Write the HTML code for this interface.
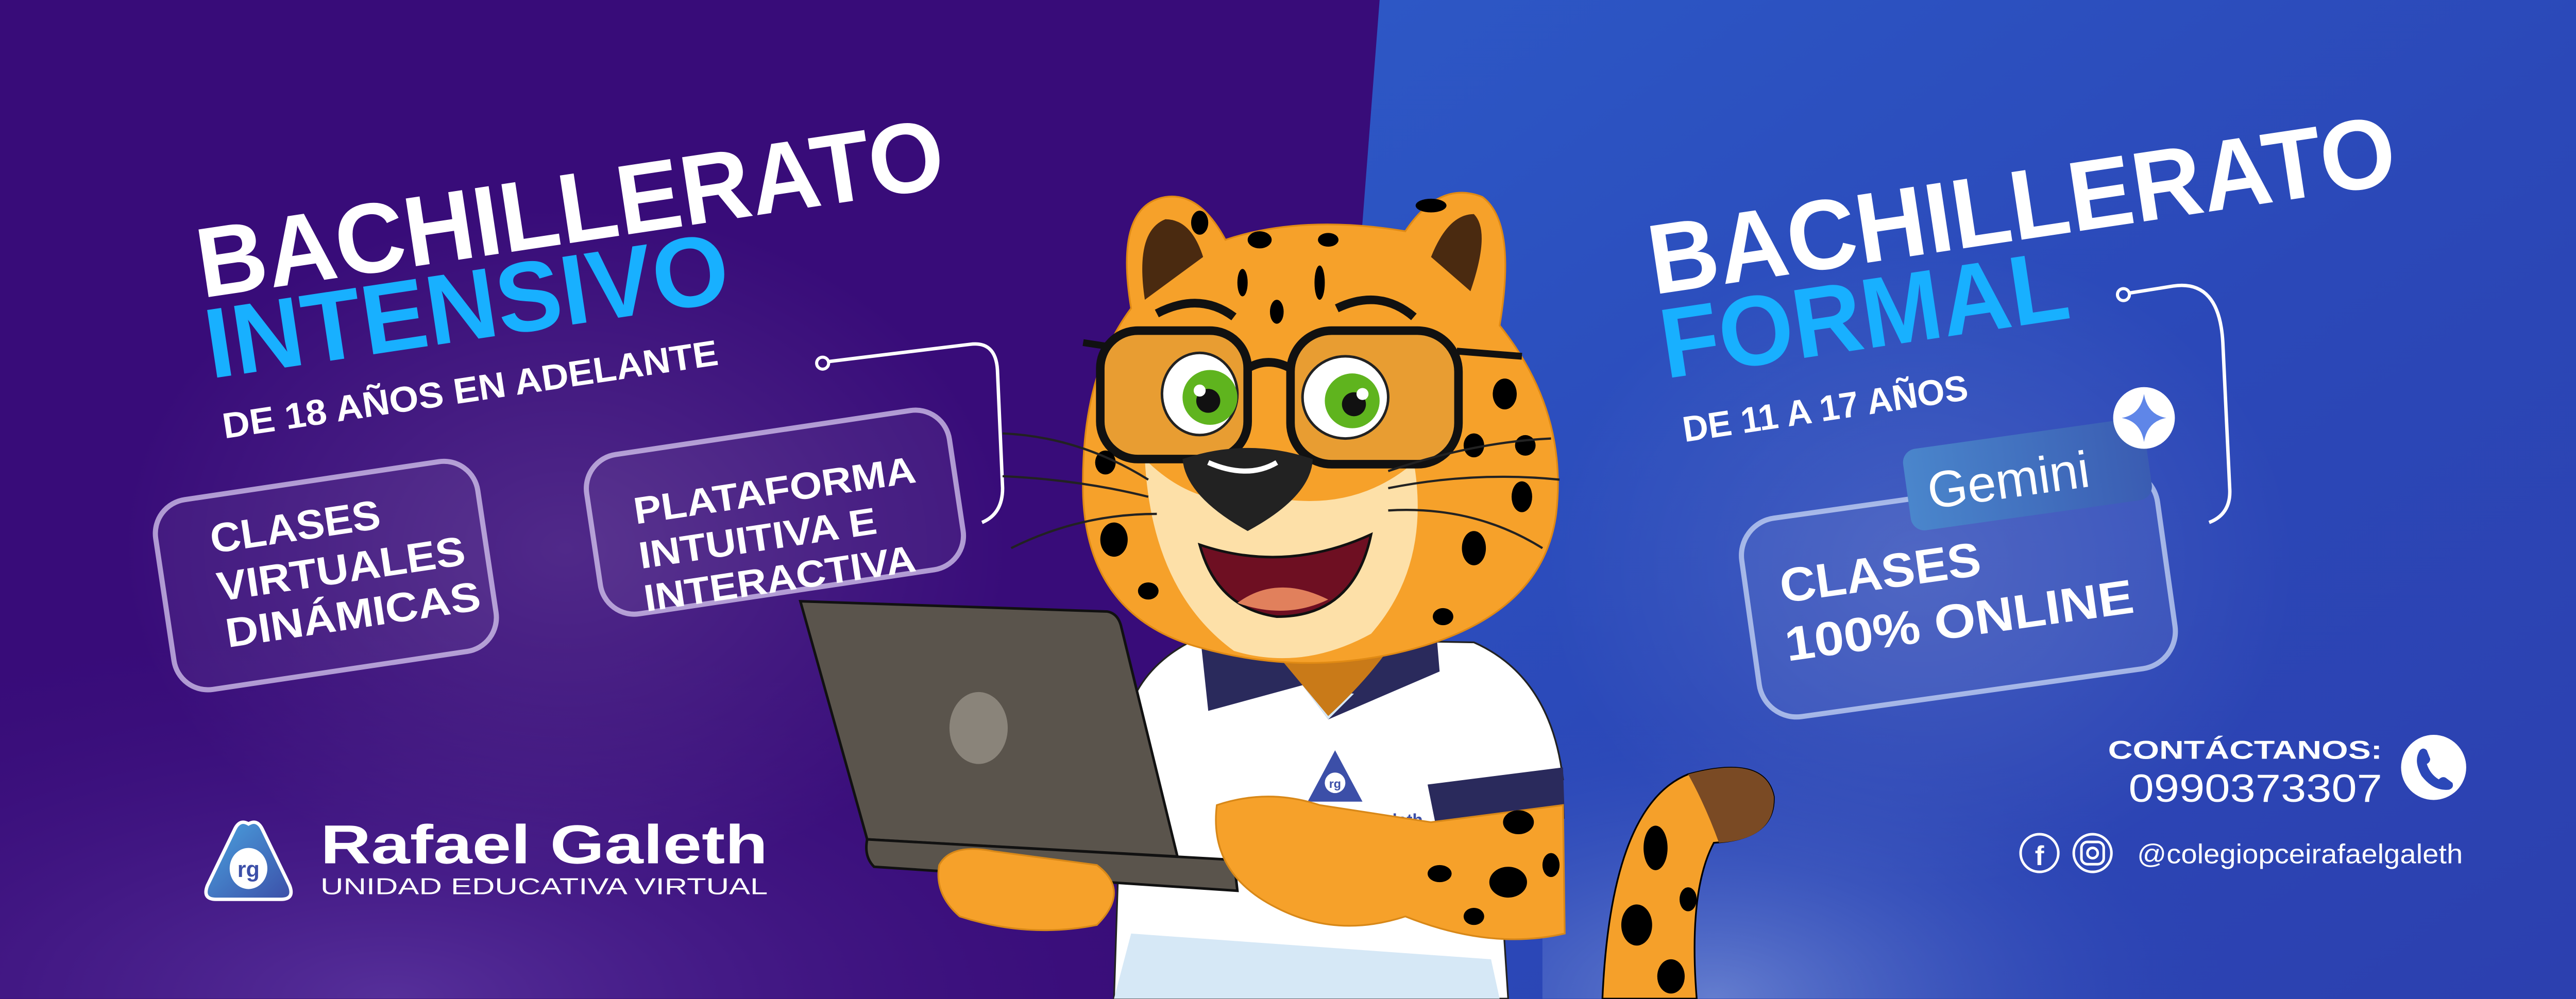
<!DOCTYPE html>
<html><head><meta charset="utf-8"><style>
html,body{margin:0;padding:0;background:#380c79;overflow:hidden;}
svg{display:block;}
text{font-family:"Liberation Sans",sans-serif;}
</style></head><body>
<svg width="5216" height="1940" viewBox="0 0 1568 583.2" preserveAspectRatio="none" xmlns="http://www.w3.org/2000/svg">
<defs>
<linearGradient id="bl" x1="0" y1="0" x2="1" y2="1"><stop offset="0" stop-color="#2d58c6"/><stop offset="0.5" stop-color="#2b48b8"/><stop offset="1" stop-color="#2c3fae"/></linearGradient>
<radialGradient id="hazeL" cx="0.3" cy="1" r="0.7"><stop offset="0" stop-color="#6a47b0" stop-opacity="0.6"/><stop offset="1" stop-color="#380c79" stop-opacity="0"/></radialGradient>
<radialGradient id="hazeR" cx="0.2" cy="1" r="0.6"><stop offset="0" stop-color="#8aa2e0" stop-opacity="0.6"/><stop offset="1" stop-color="#2b48b8" stop-opacity="0"/></radialGradient>
<radialGradient id="soft" cx="0.5" cy="0.5" r="0.5"><stop offset="0" stop-color="#ffffff" stop-opacity="0.12"/><stop offset="1" stop-color="#ffffff" stop-opacity="0"/></radialGradient>
<linearGradient id="gem" x1="0" y1="0" x2="1" y2="0"><stop offset="0" stop-color="#4a86cc"/><stop offset="1" stop-color="#3a5cb2"/></linearGradient>
<linearGradient id="logo" x1="0" y1="0" x2="1" y2="1"><stop offset="0" stop-color="#4aa3df"/><stop offset="1" stop-color="#3c4fa8"/></linearGradient>
</defs>
<rect width="1568" height="583.2" fill="#380c79"/>
<rect x="0" y="250" width="760" height="333" fill="url(#hazeL)"/>
<ellipse cx="330" cy="320" rx="260" ry="200" fill="url(#soft)"/>
<polygon points="805,0 1568,0 1568,583.2 760,583.2" fill="url(#bl)"/>
<rect x="900" y="300" width="500" height="283" fill="url(#hazeR)"/>
<ellipse cx="1120" cy="330" rx="220" ry="190" fill="url(#soft)"/>

<g fill="#fff" font-weight="bold">
<text x="118" y="174" font-size="58" textLength="440" lengthAdjust="spacingAndGlyphs" transform="rotate(-8.5 118 174)">BACHILLERATO</text>
<text x="123" y="221" font-size="58" fill="#18b0ff" textLength="308" lengthAdjust="spacingAndGlyphs" transform="rotate(-8.5 123 221)">INTENSIVO</text>
<text x="131" y="256" font-size="21" textLength="292" lengthAdjust="spacingAndGlyphs" transform="rotate(-8.5 131 256)">DE 18 AÑOS EN ADELANTE</text>
</g>
<g transform="rotate(-8.5 190 335)"><rect x="95" y="280" width="190" height="112" rx="20" fill="rgba(255,255,255,0.05)" stroke="rgba(215,200,240,0.75)" stroke-width="3"/></g>
<g transform="rotate(-8.5 452 298)"><rect x="345" y="252" width="214" height="94" rx="20" fill="rgba(255,255,255,0.05)" stroke="rgba(215,200,240,0.75)" stroke-width="3"/></g>
<g fill="#fff" font-weight="bold" font-size="24">
<text x="124" y="323" textLength="100" lengthAdjust="spacingAndGlyphs" transform="rotate(-8.5 124 323)">CLASES</text>
<text x="128" y="351" textLength="146" lengthAdjust="spacingAndGlyphs" transform="rotate(-8.5 128 351)">VIRTUALES</text>
<text x="133" y="378" textLength="150" lengthAdjust="spacingAndGlyphs" transform="rotate(-8.5 133 378)">DINÁMICAS</text>
<text x="371" y="306" font-size="22" textLength="166" lengthAdjust="spacingAndGlyphs" transform="rotate(-8.5 371 306)">PLATAFORMA</text>
<text x="374" y="332" font-size="22" textLength="140" lengthAdjust="spacingAndGlyphs" transform="rotate(-8.5 374 332)">INTUITIVA E</text>
<text x="377" y="357" font-size="22" textLength="160" lengthAdjust="spacingAndGlyphs" transform="rotate(-8.5 377 357)">INTERACTIVA</text>
</g>
<circle cx="480" cy="212" r="3.5" fill="none" stroke="#fff" stroke-width="1.8"/>
<path d="M484 211 L566 201 Q581 199 582 216 L585 285 Q585 300 573 305" fill="none" stroke="#fff" stroke-width="2"/>

<path d="M145 481 Q150 478 153 484 L169 517 Q172 525 164 525 L126 525 Q118 525 121 517 L137 484 Q140 478 145 481Z" fill="url(#logo)" stroke="#fff" stroke-width="2"/>
<ellipse cx="145" cy="507" rx="11" ry="12" fill="#fff"/>
<text x="145" y="512" font-size="13" font-weight="bold" fill="#3c4fa8" text-anchor="middle">rg</text>
<text x="187" y="504" font-size="32" font-weight="bold" fill="#fff" textLength="261" lengthAdjust="spacingAndGlyphs">Rafael Galeth</text>
<text x="187" y="522" font-size="13.5" fill="#fff" textLength="261" lengthAdjust="spacingAndGlyphs">UNIDAD EDUCATIVA VIRTUAL</text>

<g fill="#fff" font-weight="bold">
<text x="965" y="172" font-size="58" textLength="440" lengthAdjust="spacingAndGlyphs" transform="rotate(-8.5 965 172)">BACHILLERATO</text>
<text x="972" y="221" font-size="58" fill="#18b0ff" textLength="240" lengthAdjust="spacingAndGlyphs" transform="rotate(-8.5 972 221)">FORMAL</text>
<text x="983" y="258" font-size="21" textLength="168" lengthAdjust="spacingAndGlyphs" transform="rotate(-8.5 983 258)">DE 11 A 17 AÑOS</text>
</g>
<g transform="rotate(-8 1142 345)"><rect x="1020" y="288" width="245" height="117" rx="22" fill="rgba(255,255,255,0.06)" stroke="rgba(200,215,245,0.75)" stroke-width="3"/></g>
<circle cx="1239" cy="172" r="3.5" fill="none" stroke="#fff" stroke-width="1.8"/>
<path d="M1243 171 L1268 167 Q1295 163 1297 200 L1301 285 Q1302 300 1289 305" fill="none" stroke="#fff" stroke-width="2"/>
<g transform="rotate(-8 1183 277)"><rect x="1112" y="253" width="142" height="48" rx="8" fill="url(#gem)"/>
<text x="1124" y="289" font-size="30" fill="#fff">Gemini</text></g>
<circle cx="1251" cy="244" r="18" fill="#fff"/>
<path d="M1251 230 Q1253 242 1264 244 Q1253 246 1251 258 Q1249 246 1238 244 Q1249 242 1251 230Z" fill="#5f86e8"/>
<g fill="#fff" font-weight="bold" font-size="28">
<text x="1040" y="352" textLength="118" lengthAdjust="spacingAndGlyphs" transform="rotate(-8 1040 352)">CLASES</text>
<text x="1043" y="386" textLength="205" lengthAdjust="spacingAndGlyphs" transform="rotate(-8 1043 386)">100% ONLINE</text>
</g>
<text x="1230" y="443" font-size="15" font-weight="bold" fill="#fff" textLength="160" lengthAdjust="spacingAndGlyphs">CONTÁCTANOS:</text>
<text x="1242" y="468" font-size="23" fill="#fff" textLength="148" lengthAdjust="spacingAndGlyphs">0990373307</text>
<circle cx="1420" cy="448" r="19" fill="#fff"/>
<path d="M1412 438 Q1414 436 1416 438 L1418 443 Q1418 445 1416 446 Q1418 452 1423 455 Q1425 453 1427 454 L1431 457 Q1432 460 1429 461 Q1420 462 1413 453 Q1408 444 1412 438Z" fill="#2b48b8"/>
<circle cx="1190" cy="498" r="11" fill="none" stroke="#fff" stroke-width="1.5"/>
<text x="1190" y="505" font-size="16" font-weight="bold" fill="#fff" text-anchor="middle">f</text>
<circle cx="1221" cy="498" r="11" fill="none" stroke="#fff" stroke-width="1.5"/>
<rect x="1214.5" y="491.5" width="13" height="13" rx="3.5" fill="none" stroke="#fff" stroke-width="1.5"/>
<circle cx="1221" cy="498" r="3" fill="none" stroke="#fff" stroke-width="1.5"/>
<text x="1247" y="504" font-size="16" fill="#fff" textLength="190" lengthAdjust="spacingAndGlyphs">@colegiopceirafaelgaleth</text>

<path d="M935 583 Q940 470 985 452 Q1030 440 1035 465 Q1036 490 1000 492 Q985 520 990 583Z" fill="#f5a02a" stroke="#000" stroke-width="1"/>
<path d="M985 452 Q1030 440 1035 465 Q1036 490 1003 492 Q995 470 985 452Z" fill="#7a4a24"/>
<ellipse cx="966" cy="495" rx="7" ry="13" fill="#000"/><ellipse cx="955" cy="540" rx="9" ry="12" fill="#000"/><ellipse cx="975" cy="570" rx="8" ry="10" fill="#000"/><ellipse cx="985" cy="525" rx="5" ry="7" fill="#000"/>

<path d="M700 372 Q660 390 655 430 L650 583 L880 583 L872 460 L912 455 Q905 395 860 375Z" fill="#fff" stroke="#222" stroke-width="1"/>
<path d="M660 545 L870 560 L875 583 L650 583Z" fill="#d6e8f6"/>
<path d="M700 368 L705 415 L760 400 L775 420 L840 392 L838 368Z" fill="#2a2a5c"/>
<path d="M760 400 L775 420 L790 405Z" fill="#d6e8f6"/>
<path d="M735 370 Q760 400 775 418 Q800 395 815 372Z" fill="#c97a18"/>
<path d="M833 458 L912 448 L913 478 L838 483Z" fill="#2a2a5c"/>
<path d="M779 438 L795 468 L763 468Z" fill="#3c4fa8"/>
<circle cx="779" cy="457" r="6" fill="#fff"/>
<text x="779" y="460" font-size="7" font-weight="bold" fill="#3c4fa8" text-anchor="middle">rg</text>
<text x="788" y="482" font-size="10" font-weight="bold" fill="#3c4fa8">el Galeth</text>

<path d="M660 180 Q650 120 680 115 Q700 112 715 140 Q760 125 820 135 Q840 105 865 115 Q885 130 875 190 Q915 240 908 300 Q900 360 820 380 Q760 395 700 378 Q635 360 632 290 Q630 220 660 180Z" fill="#f6a12a" stroke="#e08a14" stroke-width="1"/>
<path d="M668 175 Q662 135 680 128 Q695 128 702 150Z" fill="#4a2a10"/>
<path d="M858 170 Q870 135 860 125 Q845 125 835 150Z" fill="#4a2a10"/>
<path d="M668 268 Q700 300 740 290 Q790 300 825 270 Q835 330 800 370 Q760 392 720 380 Q672 345 668 268Z" fill="#fde0a8"/>
<path d="M632 200 L645 202 M850 205 L888 208" stroke="#111" stroke-width="4"/>
<rect x="642" y="193" width="86" height="75" rx="22" fill="#d99a3a" fill-opacity="0.5" stroke="#111" stroke-width="5"/>
<rect x="753" y="193" width="98" height="78" rx="24" fill="#d99a3a" fill-opacity="0.5" stroke="#111" stroke-width="5"/>
<path d="M728 215 Q740 208 753 215" stroke="#111" stroke-width="5" fill="none"/>
<ellipse cx="700" cy="230" rx="22" ry="24" fill="#fff" stroke="#222" stroke-width="1.5"/>
<circle cx="706" cy="232" r="16" fill="#5fb41e"/><circle cx="705" cy="234" r="7" fill="#111"/><circle cx="700" cy="228" r="3.5" fill="#fff"/>
<ellipse cx="785" cy="232" rx="25" ry="24" fill="#fff" stroke="#222" stroke-width="1.5"/>
<circle cx="789" cy="234" r="16" fill="#5fb41e"/><circle cx="790" cy="236" r="7" fill="#111"/><circle cx="795" cy="230" r="3.5" fill="#fff"/>
<path d="M675 183 Q700 170 720 185" stroke="#111" stroke-width="5" fill="none"/>
<path d="M780 180 Q805 168 825 185" stroke="#111" stroke-width="5" fill="none"/>
<path d="M690 268 Q728 255 766 268 Q765 290 728 310 Q692 290 690 268Z" fill="#222"/>
<path d="M705 270 Q728 280 745 270" stroke="#fff" stroke-width="3" fill="none"/>
<path d="M700 318 Q750 335 800 312 Q790 360 745 360 Q710 355 700 318Z" fill="#6e0f22" stroke="#111" stroke-width="1.5"/>
<path d="M722 352 Q745 335 775 350 Q750 362 722 352Z" fill="#e1805c"/>
<g fill="#000">
<ellipse cx="700" cy="130" rx="5" ry="7"/><ellipse cx="735" cy="140" rx="7" ry="5"/><ellipse cx="775" cy="140" rx="6" ry="4"/><ellipse cx="835" cy="120" rx="9" ry="4"/>
<ellipse cx="725" cy="165" rx="3" ry="8"/><ellipse cx="770" cy="165" rx="3" ry="10"/><ellipse cx="745" cy="182" rx="4" ry="7"/>
<ellipse cx="878" cy="230" rx="7" ry="9"/><ellipse cx="890" cy="260" rx="6" ry="6"/><ellipse cx="888" cy="290" rx="6" ry="9"/><ellipse cx="860" cy="320" rx="7" ry="10"/><ellipse cx="860" cy="260" rx="6" ry="7"/>
<ellipse cx="645" cy="270" rx="6" ry="7"/><ellipse cx="650" cy="315" rx="8" ry="10"/><ellipse cx="670" cy="345" rx="6" ry="5"/><ellipse cx="842" cy="360" rx="6" ry="5"/>
</g>
<g stroke="#222" stroke-width="1.3" fill="none">
<path d="M670 280 Q630 255 585 253"/><path d="M670 290 Q630 280 585 278"/><path d="M675 300 Q630 300 590 320"/>
<path d="M810 275 Q860 258 905 256"/><path d="M810 285 Q860 275 910 280"/><path d="M810 298 Q860 295 900 320"/>
</g>

<path d="M467 351 L646 357 Q652 358 654 365 L687 500 L506 490 Z" fill="#5a544c" stroke="#111" stroke-width="1.5"/>
<ellipse cx="571" cy="425" rx="17" ry="21" fill="#8a847a"/>
<path d="M506 490 L720 502 L722 520 L510 506 Q504 500 506 490Z" fill="#5a544c" stroke="#111" stroke-width="1.5"/>
<path d="M548 505 Q555 492 580 497 L640 505 Q660 520 640 540 Q600 548 560 535 Q545 522 548 505Z" fill="#f6a12a" stroke="#d88818" stroke-width="1"/>
<path d="M710 470 Q740 460 770 470 L835 480 L912 470 L913 545 Q870 555 820 535 Q780 548 745 530 Q705 510 710 470Z" fill="#f6a12a" stroke="#d88818" stroke-width="1"/>
<g fill="#000"><ellipse cx="886" cy="480" rx="9" ry="7"/><ellipse cx="880" cy="515" rx="11" ry="9"/><ellipse cx="840" cy="510" rx="7" ry="5"/><ellipse cx="860" cy="535" rx="6" ry="5"/><ellipse cx="905" cy="505" rx="5" ry="7"/></g>
</svg>
</body></html>
